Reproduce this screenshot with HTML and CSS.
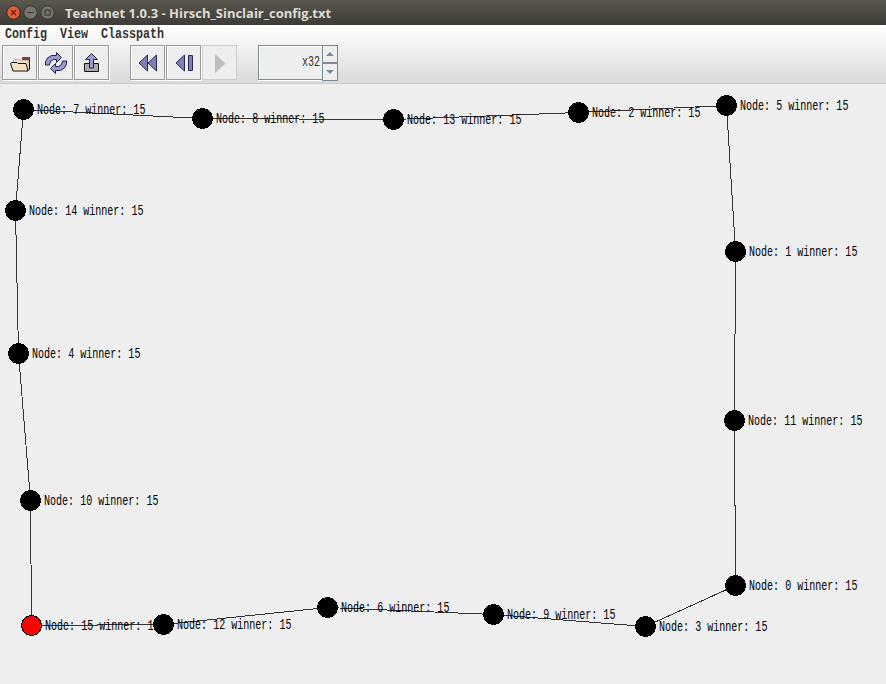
FILE: index.html
```html
<!DOCTYPE html>
<html lang="en">
<head>
<meta charset="utf-8">
<title>Teachnet</title>
<link rel="stylesheet" href="styles.css">
</head>
<body>
<header class="titlebar">
  <svg class="winbtns" width="56" height="25" viewBox="0 0 56 25">
    <circle cx="13.5" cy="12.5" r="6.7" fill="#ea5b32" stroke="#30302b"/>
    <path d="M11 10l5 5M16 10l-5 5" stroke="#59230f" stroke-width="1.3"/>
    <circle cx="30.5" cy="12.5" r="6.7" fill="#78766e" stroke="#33322d"/>
    <path d="M27.5 12.5h6" stroke="#3b3a35" stroke-width="1.2"/>
    <circle cx="47.5" cy="12.5" r="6.7" fill="#78766e" stroke="#33322d"/>
    <rect x="45" y="10" width="5" height="5" fill="none" stroke="#3b3a35" stroke-width="1.2"/>
  </svg>
  <h1 class="title">Teachnet 1.0.3 - Hirsch_Sinclair_config.txt</h1>
</header>
<div class="chrome">
  <nav class="menu"><span>Config</span><span>View</span><span>Classpath</span></nav>
  <div class="toolbar">
    <button class="tool"><svg width="24" height="24" viewBox="0 0 24 24">
      <path d="M14 6h8v3h-8z" fill="#833f43"/>
      <path d="M5.5 11V9.500l1-1h5l1.500 1h8v9l-3 1.500" fill="#eddcc6" stroke="#c9b79f"/>
      <path d="M21.500 9v9l-2 2" fill="none" stroke="#111"/>
      <path d="M2.500 12.500l1.500-1h5l1 1h8l2 7.500H5z" fill="#f5e1c8" stroke="#111"/></svg></button>
    <button class="tool"><svg width="24" height="24" viewBox="0 0 24 24">
      <path id="arc" d="M1.500 14v-3l2-4 4-2.500h5V1.500l5 5-5 5V8.500h-3l-3 2-1 3.500z" fill="#9a9ad2" stroke="#222244"/>
      <use href="#arc" transform="rotate(180 12 12)"/></svg></button>
    <button class="tool"><svg width="24" height="24" viewBox="0 0 24 24">
      <path d="M4.500 12.500h14v8h-14z" fill="#aaa" stroke="#111"/>
      <path d="M9.500 17v-8.500h-4l6-6 6 6h-4V17z" fill="#9a9ad2" stroke="#222244"/></svg></button>
    <button class="tool gap"><svg width="24" height="24" viewBox="0 0 24 24">
      <path d="M11.500 4v16L3 12zM20.500 4v16L12 12z" fill="#8080b5" stroke="#292950"/></svg></button>
    <button class="tool"><svg width="24" height="24" viewBox="0 0 24 24">
      <path d="M12.500 4v16L4 12zM16.500 4.500h4v15h-4z" fill="#8080b5" stroke="#292950"/></svg></button>
    <button class="tool off"><svg width="24" height="24" viewBox="0 0 24 24">
      <path d="M7 3l10.500 9.500L7 22z" fill="#bdbdbd"/></svg></button>
    <div class="spinner"><div class="value"><span>x32</span></div>
      <div class="steps"><i class="up"></i><i class="down"></i></div></div>
  </div>
</div>
<main><svg id="graph" width="886" height="600" viewBox="0 84 886 600"></svg></main>
<script src="graph.js"></script>
</body>
</html>
```
FILE: styles.css
```css
* { box-sizing: border-box; }
body { margin: 0; width: 886px; height: 684px; overflow: hidden; background: #eee; color: #333; font-family: "Liberation Mono", monospace; }
.titlebar { height: 25px; display: flex; align-items: center; background: linear-gradient(#5a584e, #3c3b37); }
.winbtns { flex: none; }
.title { margin: 0 0 0 9px; padding-top: 2px; font: bold 13px/25px "Open Sans", sans-serif; letter-spacing: -0.01px; color: #dfdbd2; white-space: nowrap; }
.chrome { height: 59px; background: linear-gradient(#fff, #dadada); border-bottom: 1px solid #ccc; }
.menu { height: 17px; display: flex; gap: 13px; padding-left: 5px; font-weight: bold; font-size: 11.67px; line-height: 18px; }
.menu span { transform: scaleY(1.2); }
.toolbar { display: flex; padding: 3px 0 0 2px; gap: 1px; }
.tool { width: 35px; height: 35px; padding: 0; display: flex; align-items: center; justify-content: center; border: 1px solid #999; background: #eee; box-shadow: inset 1px 1px #fff, 1px 1px #fff; }
.gap { margin-left: 20px; }
.off { border-color: #ccc; box-shadow: none; }
.spinner { margin-left: 20px; width: 80px; height: 36px; display: flex; }
.value { width: 64px; height: 35px; border: 1px solid #7a8a99; border-right: 0; box-shadow: inset 1px 1px #fff, 0 1px #fff; background: #eee; text-align: right; padding-right: 2px; font-size: 10px; line-height: 34px; }
.value span { display: inline-block; transform: scaleY(1.45); }
.steps { width: 16px; height: 36px; border: 1px solid #7a8a99; background: #eee; }
.steps i { height: 17px; display: flex; align-items: center; justify-content: center; }
.steps .up { border-bottom: 1px solid #7a8a99; }
.steps .down { border-top: 1px solid #7a8a99; }
.steps i::after { content: ""; border: 4px solid transparent; }
.steps .up::after { border-top: 0; border-bottom-color: #7a8a99; }
.steps .down::after { border-bottom: 0; border-top-color: #7a8a99; }
main { height: 600px; }
main svg { display: block; }
.edge { stroke: #333; stroke-width: 1; shape-rendering: crispEdges; }
.node { stroke: #000; stroke-width: 1; shape-rendering: crispEdges; }
.label { font-size: 10.05px; fill: #000; white-space: pre; }
```
FILE: graph.js
```js
// Ring of nodes in edge order: [id, x, y]
const nodes = [[15,31,625],[12,163,624],[6,327,607],[9,493,614],[3,645,626],[0,735,585],[11,734,420],[1,735,251],[5,726,105],[2,578,112],[13,393,119],[8,202,118],[7,23,109],[14,15,210],[4,18,353],[10,30,500]];
const graph = document.getElementById('graph');
function add(tag, attrs, text) {
  const el = document.createElementNS('http://www.w3.org/2000/svg', tag);
  for (const k in attrs) el.setAttribute(k, attrs[k]);
  if (text) el.textContent = text;
  graph.appendChild(el);
}
nodes.forEach(([, x, y], i) => {
  const [, x2, y2] = nodes[(i + 1) % nodes.length];
  add('line', { class: 'edge', x1: x + .5, y1: y + .5, x2: x2 + .5, y2: y2 + .5 });
});
nodes.forEach(([id, x, y]) => {
  add('text', { class: 'label', transform: `translate(${x + 14} ${y + 5}) scale(1 1.45)` }, `Node: ${id} winner: 15`);
});
nodes.forEach(([id, x, y]) => {
  add('circle', { class: 'node', cx: x + .5, cy: y + .5, r: 10, fill: id === 15 ? '#f00' : '#000' });
});
```
